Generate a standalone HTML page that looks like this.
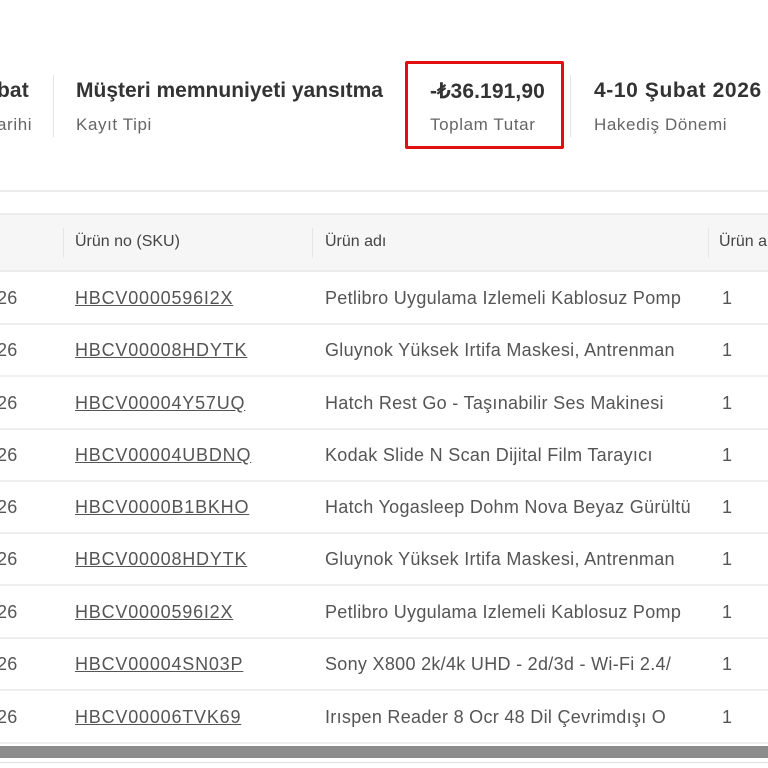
<!DOCTYPE html>
<html><head><meta charset="utf-8"><style>
*{margin:0;padding:0;box-sizing:border-box}
body{width:768px;height:768px;overflow:hidden;background:#fff;font-family:"Liberation Sans",sans-serif;position:relative;color:#333}
.a{position:absolute;white-space:nowrap}
.v{font-size:21px;font-weight:bold;color:#333;top:79px;letter-spacing:0.1px}
.l{font-size:17px;color:#666;top:115px;letter-spacing:0.6px}
.sep{position:absolute;width:1px;background:#e4e4e4;top:75px;height:62px}
.row{position:absolute;left:0;width:768px;height:52px;border-bottom:2px solid #efefef}
.row span{position:absolute;top:15px;font-size:18px;color:#555;white-space:nowrap;letter-spacing:0.3px}
.row .s{left:75px;text-decoration:underline;color:#555;letter-spacing:0.8px}
</style></head><body>
<div class="a v" style="left:-3px">bat</div>
<div class="a l" style="left:-3px">arihi</div>
<div class="sep" style="left:53px"></div>
<div class="a v" style="left:76px;letter-spacing:0">Müşteri memnuniyeti yansıtma</div>
<div class="a l" style="left:76px">Kayıt Tipi</div>
<div class="a" style="left:405px;top:61px;width:159px;height:88px;border:3px solid #e01010;border-radius:2px"></div>
<div class="a v" style="left:430px">-₺36.191,90</div>
<div class="a l" style="left:430px">Toplam Tutar</div>
<div class="sep" style="left:570px"></div>
<div class="a v" style="left:594px;letter-spacing:0.6px">4-10 Şubat 2026</div>
<div class="a l" style="left:594px">Hakediş Dönemi</div>
<div class="a" style="left:0;top:190px;width:768px;height:2px;background:#ececec"></div>
<div class="a" style="left:0;top:213px;width:768px;height:59px;background:#f6f6f6;border-top:2px solid #ececec;border-bottom:2px solid #ececec"></div>
<div class="a" style="left:63px;top:228px;width:1px;height:30px;background:#e6e6e6"></div>
<div class="a" style="left:312px;top:228px;width:1px;height:30px;background:#e6e6e6"></div>
<div class="a" style="left:708px;top:228px;width:1px;height:30px;background:#e6e6e6"></div>
<div class="a" style="left:75px;top:233px;font-size:16px;color:#444">Ürün no (SKU)</div>
<div class="a" style="left:325px;top:233px;font-size:16px;color:#444">Ürün adı</div>
<div class="a" style="left:719px;top:233px;font-size:16px;color:#444">Ürün a</div>
<div class="row" style="top:273px"><span style="left:-3px">26</span><span class="s">HBCV0000596I2X</span><span style="left:325px">Petlibro Uygulama Izlemeli Kablosuz Pomp</span><span style="left:722px">1</span></div>
<div class="row" style="top:325px"><span style="left:-3px">26</span><span class="s">HBCV00008HDYTK</span><span style="left:325px">Gluynok Yüksek Irtifa Maskesi, Antrenman</span><span style="left:722px">1</span></div>
<div class="row" style="top:378px"><span style="left:-3px">26</span><span class="s">HBCV00004Y57UQ</span><span style="left:325px">Hatch Rest Go - Taşınabilir Ses Makinesi</span><span style="left:722px">1</span></div>
<div class="row" style="top:430px"><span style="left:-3px">26</span><span class="s">HBCV00004UBDNQ</span><span style="left:325px">Kodak Slide N Scan Dijital Film Tarayıcı</span><span style="left:722px">1</span></div>
<div class="row" style="top:482px"><span style="left:-3px">26</span><span class="s">HBCV0000B1BKHO</span><span style="left:325px">Hatch Yogasleep Dohm Nova Beyaz Gürültü</span><span style="left:722px">1</span></div>
<div class="row" style="top:534px"><span style="left:-3px">26</span><span class="s">HBCV00008HDYTK</span><span style="left:325px">Gluynok Yüksek Irtifa Maskesi, Antrenman</span><span style="left:722px">1</span></div>
<div class="row" style="top:587px"><span style="left:-3px">26</span><span class="s">HBCV0000596I2X</span><span style="left:325px">Petlibro Uygulama Izlemeli Kablosuz Pomp</span><span style="left:722px">1</span></div>
<div class="row" style="top:639px"><span style="left:-3px">26</span><span class="s">HBCV00004SN03P</span><span style="left:325px">Sony X800 2k/4k UHD - 2d/3d - Wi-Fi 2.4/</span><span style="left:722px">1</span></div>
<div class="row" style="top:692px"><span style="left:-3px">26</span><span class="s">HBCV00006TVK69</span><span style="left:325px">Irıspen Reader 8 Ocr 48 Dil Çevrimdışı O</span><span style="left:722px">1</span></div>
<div class="a" style="left:0;top:746px;width:768px;height:12px;background:#8c8c8c"></div>
<div class="a" style="left:0;top:762px;width:768px;height:1px;background:#ddd"></div>
</body></html>
